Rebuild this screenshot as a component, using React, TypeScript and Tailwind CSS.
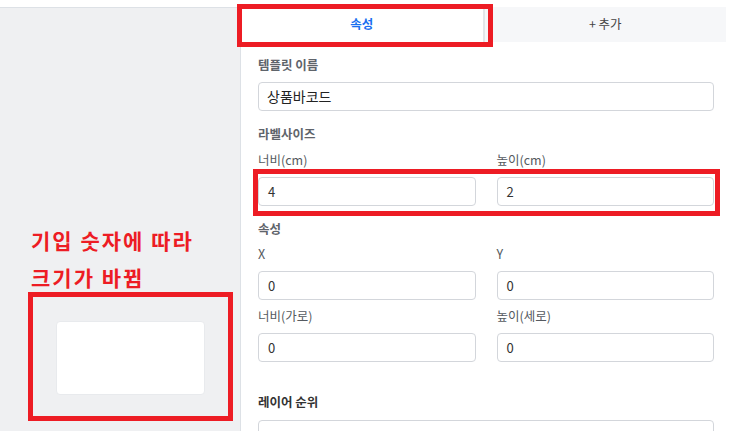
import React from 'react';

const font = { fontFamily: '"Noto Sans CJK KR", "Noto Sans", sans-serif' };

function Field({ label, value }: { label: string; value: string }) {
  return (
    <div className="flex flex-col">
      <div className="h-[18px] text-[12.5px] leading-[18px] text-[#555a60]">{label}</div>
      <div className="mt-[8px] flex h-[29px] items-center rounded-[4px] border border-[#d3d6db] bg-white px-[9px] text-[13px] text-[#333]">
        {value}
      </div>
    </div>
  );
}

function SectionTitle({ children, dark }: { children: React.ReactNode; dark?: boolean }) {
  return (
    <div
      className={`h-[18px] text-[12.5px] font-bold leading-[18px] ${
        dark ? 'text-[#333]' : 'text-[#5f646b]'
      }`}
    >
      {children}
    </div>
  );
}

export default function App() {
  return (
    <div className="relative h-[431px] w-[732px] overflow-hidden bg-white" style={font}>
      {/* top strip */}
      <div className="h-[7px] bg-white" />

      <div className="flex h-[424px] overflow-hidden">
        {/* Preview panel */}
        <div className="w-[241px] shrink-0 border-r border-t border-[#dde1e6] bg-[#eff0f2] pl-[28px]">
          <div className="mt-[218px] flex flex-col gap-[9px] pl-[3px] text-[21px] font-bold leading-[28px] tracking-[2px] text-[#ed1c24]">
            <div>기입 숫자에 따라</div>
            <div>크기가 바뀜</div>
          </div>
          <div className="mt-[1px] flex h-[129px] w-[205px] items-center justify-center border-[5px] border-[#ed1c24] pt-[3px]">
            <div className="h-[74px] w-[149px] rounded-[4px] border border-[#e8eaed] bg-white" />
          </div>
        </div>

        {/* Properties panel */}
        <div className="min-w-0 flex-1">
          <div className="mr-[6px] flex h-[35px]">
            <div className="flex flex-1 items-center justify-center border-r-2 border-[#e3e5e8] bg-white text-[12.5px] font-bold text-[#1a6ff0]">
              속성
            </div>
            <div className="flex flex-1 items-center justify-center bg-[#f6f7f9] text-[12.5px] text-[#444]">
              + 추가
            </div>
          </div>

          <div className="pl-[17px] pr-[18px]">
            <div className="mt-[14px]">
              <SectionTitle>템플릿 이름</SectionTitle>
              <div className="mt-[8px] flex h-[29px] items-center rounded-[4px] border border-[#d3d6db] bg-white px-[8px] text-[14px] text-[#222]">
                상품바코드
              </div>
            </div>

            <div className="mt-[14px]">
              <SectionTitle>라벨사이즈</SectionTitle>
              <div className="mt-[8px] grid grid-cols-2 gap-x-[21px]">
                <Field label="너비(cm)" value="4" />
                <Field label="높이(cm)" value="2" />
              </div>
            </div>

            <div className="mt-[14px]">
              <SectionTitle>속성</SectionTitle>
              <div className="mt-[7px] grid grid-cols-2 gap-x-[21px] gap-y-[7px]">
                <Field label="X" value="0" />
                <Field label="Y" value="0" />
                <Field label="너비(가로)" value="0" />
                <Field label="높이(세로)" value="0" />
              </div>
            </div>

            <div className="mt-[31px]">
              <SectionTitle dark>레이어 순위</SectionTitle>
              <div className="mt-[9px] h-[29px] rounded-[4px] border border-[#d3d6db] bg-white" />
            </div>
          </div>
        </div>
      </div>

      {/* annotation boxes */}
      <div className="pointer-events-none absolute left-[237px] top-[4px] h-[43px] w-[256px] border-[5px] border-[#ed1c24]" />
      <div className="pointer-events-none absolute left-[253px] top-[169px] h-[47px] w-[467px] border-[5px] border-[#ed1c24]" />
    </div>
  );
}
